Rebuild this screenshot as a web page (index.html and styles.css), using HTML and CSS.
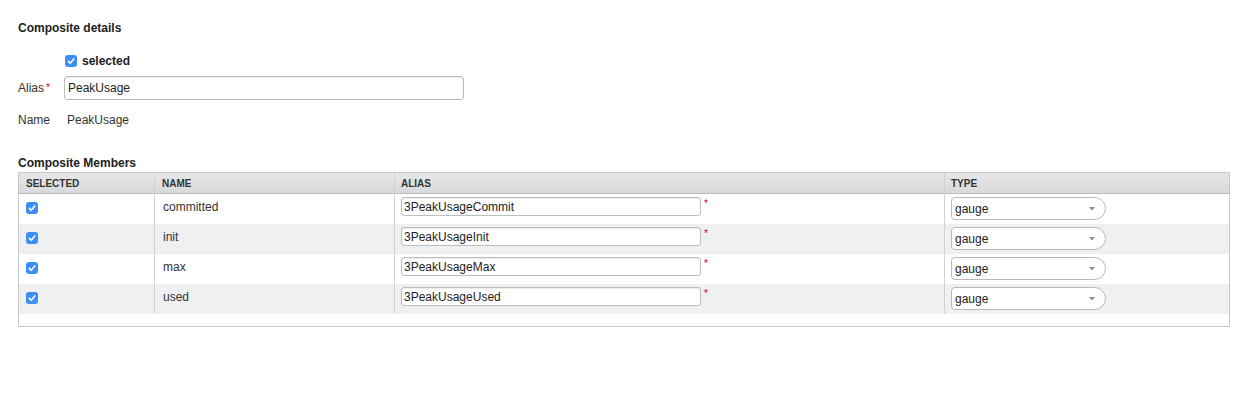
FILE: index.html
```html
<!DOCTYPE html>
<html lang="en">
<head>
<meta charset="utf-8">
<title>Composite details</title>
<link rel="stylesheet" href="styles.css">
</head>
<body>
<div class="page">
  <h2 class="title">Composite details</h2>
  <label class="check-row">
    <svg class="cb" viewBox="0 0 12 12" width="12" height="12"><rect width="12" height="12" rx="3" fill="#3a8ef6"/><path d="M3.3 6.4 L5.2 8.3 L8.8 3.9" stroke="#fff" stroke-width="1.6" fill="none" stroke-linecap="round" stroke-linejoin="round"/></svg>
    <span>selected</span>
  </label>
  <div class="field">
    <span class="label">Alias<span class="req">*</span></span>
    <input class="text" type="text" value="PeakUsage">
  </div>
  <div class="field name-row">
    <span class="label">Name</span>
    <span class="value">PeakUsage</span>
  </div>
  <h2 class="title members">Composite Members</h2>
  <div class="grid">
    <div class="row head">
      <div class="cell c1">Selected</div>
      <div class="cell c2">Name</div>
      <div class="cell c3">Alias</div>
      <div class="cell c4">Type</div>
    </div>
    <div class="row">
      <div class="cell c1"><svg class="cb" viewBox="0 0 12 12" width="12" height="12"><rect width="12" height="12" rx="3" fill="#3a8ef6"/><path d="M3.3 6.4 L5.2 8.3 L8.8 3.9" stroke="#fff" stroke-width="1.6" fill="none" stroke-linecap="round" stroke-linejoin="round"/></svg></div>
      <div class="cell c2">committed</div>
      <div class="cell c3"><input class="small" type="text" value="3PeakUsageCommit"><span class="req">*</span></div>
      <div class="cell c4"><div class="select"><span>gauge</span><svg class="arrow" viewBox="0 0 6 4" width="6" height="4"><polygon points="0,0 6,0 3,3.5" fill="#8e8e8e"/></svg></div></div>
    </div>
    <div class="row alt">
      <div class="cell c1"><svg class="cb" viewBox="0 0 12 12" width="12" height="12"><rect width="12" height="12" rx="3" fill="#3a8ef6"/><path d="M3.3 6.4 L5.2 8.3 L8.8 3.9" stroke="#fff" stroke-width="1.6" fill="none" stroke-linecap="round" stroke-linejoin="round"/></svg></div>
      <div class="cell c2">init</div>
      <div class="cell c3"><input class="small" type="text" value="3PeakUsageInit"><span class="req">*</span></div>
      <div class="cell c4"><div class="select"><span>gauge</span><svg class="arrow" viewBox="0 0 6 4" width="6" height="4"><polygon points="0,0 6,0 3,3.5" fill="#8e8e8e"/></svg></div></div>
    </div>
    <div class="row">
      <div class="cell c1"><svg class="cb" viewBox="0 0 12 12" width="12" height="12"><rect width="12" height="12" rx="3" fill="#3a8ef6"/><path d="M3.3 6.4 L5.2 8.3 L8.8 3.9" stroke="#fff" stroke-width="1.6" fill="none" stroke-linecap="round" stroke-linejoin="round"/></svg></div>
      <div class="cell c2">max</div>
      <div class="cell c3"><input class="small" type="text" value="3PeakUsageMax"><span class="req">*</span></div>
      <div class="cell c4"><div class="select"><span>gauge</span><svg class="arrow" viewBox="0 0 6 4" width="6" height="4"><polygon points="0,0 6,0 3,3.5" fill="#8e8e8e"/></svg></div></div>
    </div>
    <div class="row alt">
      <div class="cell c1"><svg class="cb" viewBox="0 0 12 12" width="12" height="12"><rect width="12" height="12" rx="3" fill="#3a8ef6"/><path d="M3.3 6.4 L5.2 8.3 L8.8 3.9" stroke="#fff" stroke-width="1.6" fill="none" stroke-linecap="round" stroke-linejoin="round"/></svg></div>
      <div class="cell c2">used</div>
      <div class="cell c3"><input class="small" type="text" value="3PeakUsageUsed"><span class="req">*</span></div>
      <div class="cell c4"><div class="select"><span>gauge</span><svg class="arrow" viewBox="0 0 6 4" width="6" height="4"><polygon points="0,0 6,0 3,3.5" fill="#8e8e8e"/></svg></div></div>
    </div>
    <div class="filler"></div>
  </div>
</div>
</body>
</html>
```
FILE: styles.css
```css
body {
  margin: 0;
  background: #fff;
  font-family: "Liberation Sans", Arial, sans-serif;
  font-size: 12px;
  color: #333;
}
.page {
  padding: 0 18px;
}
.title {
  margin: 21px 0 0;
  font-size: 12px;
  font-weight: bold;
  line-height: 14px;
  color: #222;
}
.members {
  margin-top: 29px;
}
.check-row {
  display: flex;
  align-items: center;
  gap: 5px;
  height: 14px;
  margin-top: 19px;
  padding-left: 47px;
  font-weight: bold;
  color: #222;
  line-height: 14px;
}
.cb {
  display: block;
  flex: none;
}
.field {
  display: flex;
  align-items: center;
  margin-top: 8px;
}
.label {
  width: 46px;
  flex: none;
  line-height: 14px;
}
.req {
  color: #d0021b;
  font-size: 10px;
  line-height: 10px;
  vertical-align: top;
  margin-left: 2px;
}
.label .req {
  line-height: 13px;
}
.text {
  width: 400px;
  height: 24px;
  box-sizing: border-box;
  margin: 0;
  padding: 0 3px;
  border: 1px solid #bdbdbd;
  border-radius: 3px;
  box-shadow: inset 0 1px 1px rgba(0,0,0,0.08);
  font: 12px "Liberation Sans", Arial, sans-serif;
  color: #222;
  background: #fff;
}
.name-row {
  margin-top: 13px;
  height: 14px;
}
.value {
  padding-left: 3px;
  line-height: 14px;
}
.grid {
  margin-top: 2px;
  width: 1212px;
  box-sizing: border-box;
  border: 1px solid #c6c6c6;
}
.row {
  display: grid;
  grid-template-columns: 135px 240px 550px 285px;
  height: 30px;
}
.row.alt {
  background: #eef0f2;
}
.row.head {
  height: 21px;
  box-sizing: border-box;
  border-bottom: 1px solid #bcbcbc;
  background: linear-gradient(#e7e7e8, #d8d9da);
}
.cell {
  box-sizing: border-box;
  border-left: 1px solid #d2d2d2;
  min-width: 0;
}
.cell.c1 {
  border-left: none;
}
.head .cell {
  font-size: 10px;
  font-weight: bold;
  line-height: 21px;
  text-transform: uppercase;
  color: #333;
  padding-left: 7px;
}
.head .cell.c3,
.head .cell.c4 {
  padding-left: 6px;
}
.row:not(.head) .c1 {
  padding: 8px 0 0 7px;
}
.row:not(.head) .c2 {
  padding: 6px 0 0 8px;
  line-height: 14px;
}
.row:not(.head) .c3 {
  display: flex;
  align-items: flex-start;
  padding: 3px 0 0 6px;
}
.row:not(.head) .c3 .req {
  margin: 2px 0 0 3px;
}
.row:not(.head) .c4 {
  padding: 3px 0 0 6px;
}
.small {
  width: 300px;
  height: 19px;
  box-sizing: border-box;
  margin: 0;
  padding: 0 2px;
  border: 1px solid #bdbdbd;
  border-radius: 3px;
  box-shadow: inset 0 1px 1px rgba(0,0,0,0.08);
  font: 12px "Liberation Sans", Arial, sans-serif;
  color: #222;
  background: #fff;
}
.select {
  display: flex;
  align-items: center;
  width: 155px;
  height: 23px;
  box-sizing: border-box;
  padding-left: 3px;
  border: 1px solid #b8b8b8;
  border-radius: 4px 12px 12px 4px;
  background: #fff;
  color: #222;
}
.arrow {
  display: block;
  margin-left: auto;
  margin-right: 10px;
}
.filler {
  height: 12px;
}
```
